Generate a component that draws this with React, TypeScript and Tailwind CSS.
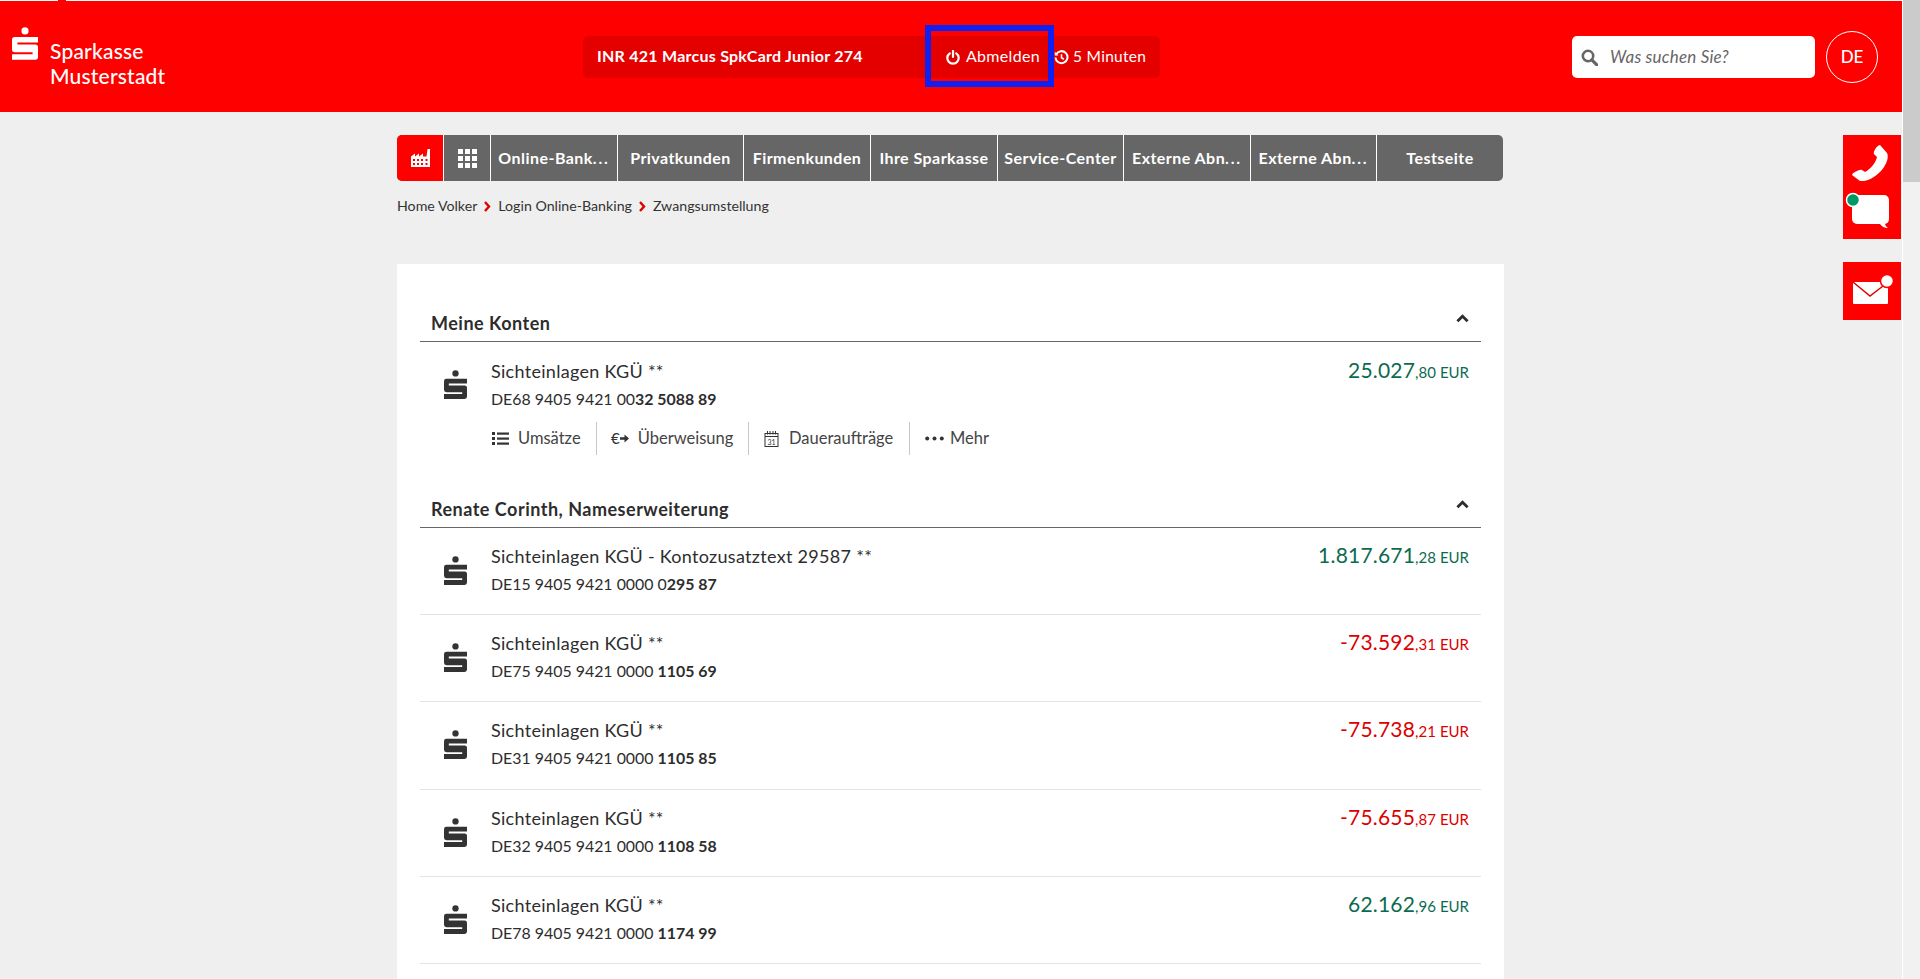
const font = "font-['Lato','Noto_Sans',sans-serif]";

const navItems = [
  { label: 'Online-Bank', dots: true, width: 'w-[127px]' },
  { label: 'Privatkunden', dots: false, width: 'w-[126px]' },
  { label: 'Firmenkunden', dots: false, width: 'w-[127px]' },
  { label: 'Ihre Sparkasse', dots: false, width: 'w-[127px]' },
  { label: 'Service-Center', dots: false, width: 'w-[126px]' },
  { label: 'Externe Abn', dots: true, width: 'w-[127px]' },
  { label: 'Externe Abn', dots: true, width: 'w-[126px]' },
  { label: 'Testseite', dots: false, width: 'w-[126px]' },
];

const accounts = [
  { name: 'Sichteinlagen KGÜ - Kontozusatztext 29587 **', iban: 'DE15 9405 9421 0000 0', bold: '295 87', euro: '1.817.671', cent: '28', height: 'h-[87px]' },
  { name: 'Sichteinlagen KGÜ **', iban: 'DE75 9405 9421 0000 ', bold: '1105 69', euro: '-73.592', cent: '31', height: 'h-[87px]' },
  { name: 'Sichteinlagen KGÜ **', iban: 'DE31 9405 9421 0000 ', bold: '1105 85', euro: '-75.738', cent: '21', height: 'h-[88px]' },
  { name: 'Sichteinlagen KGÜ **', iban: 'DE32 9405 9421 0000 ', bold: '1108 58', euro: '-75.655', cent: '87', height: 'h-[87px]' },
  { name: 'Sichteinlagen KGÜ **', iban: 'DE78 9405 9421 0000 ', bold: '1174 99', euro: '62.162', cent: '96', height: 'h-[87px]' },
];

function SparkasseS({ className }: { className: string }) {
  return (
    <svg viewBox="0 0 24 30" className={className} fill="currentColor">
      <circle cx="12" cy="3.4" r="3.3" />
      <path d="M2.5 9H24v5H5v2h16.500A2.500 2.500 0 0 1 24 18.500v9a2.500 2.500 0 0 1-2.500 2.500H0v-5h19v-2H2.500A2.500 2.500 0 0 1 0 20.500v-9A2.500 2.500 0 0 1 2.500 9z" />
    </svg>
  );
}

function Chevron() {
  return (
    <svg viewBox="0 0 14 9" className="w-[13px] h-[9px] mb-[12px] mr-[12px] text-[#2d2d2d]" fill="none" stroke="currentColor" strokeWidth="3">
      <path d="M1.500 7.500 7 2l5.500 5.500" />
    </svg>
  );
}

function Amount({ euro, cent }: { euro: string; cent: string }) {
  const color = euro.startsWith('-') ? 'text-[#dc0000]' : 'text-[#0b6b50]';
  return (
    <div className={`${color} pr-[12px] -mt-[2px] whitespace-nowrap leading-[24px]`}>
      <span className="text-[21px] tracking-[0.2px]">{euro}</span>
      <span className="text-[15px]">,{cent}</span>
      <span className="text-[15px] ml-[4px]">EUR</span>
    </div>
  );
}

function AccountInfo({ name, iban, bold }: { name: string; iban: string; bold: string }) {
  return (
    <div className="-mt-[1px]">
      <div className="text-[18px] leading-[24px] text-[#2d2d2d] tracking-[0.3px]">{name}</div>
      <div className="text-[15.900px] leading-[24px] mt-[4px] text-[#2d2d2d]">
        {iban}
        <b className="font-bold">{bold}</b>
      </div>
    </div>
  );
}

function ActionBar() {
  return (
    <div className="flex items-center h-[33px] mt-[11px] text-[16.500px] text-[#444444]">
      <div className="w-[106px] h-full border-r border-[#c8c8c8] flex items-center pl-[1px] gap-[9px]">
        <svg viewBox="0 0 17 13" className="w-[17px] h-[13px]" fill="#333333">
          <rect x="0" y="0" width="3" height="3" />
          <rect x="5" y="0.500" width="12" height="2.200" />
          <rect x="0" y="5" width="3" height="3" />
          <rect x="5" y="5.500" width="12" height="2.200" />
          <rect x="0" y="10" width="3" height="3" />
          <rect x="5" y="10.500" width="12" height="2.200" />
        </svg>
        Umsätze
      </div>
      <div className="w-[152px] h-full border-r border-[#c8c8c8] flex items-center pl-[14px]">
        <span className="text-[#333333] text-[15px]">€</span>
        <svg viewBox="0 0 10 9" className="w-[9px] h-[9px] mr-[9px]" fill="#333333">
          <path d="M0 3.200h5V0l5 4.500L5 9V5.800H0z" />
        </svg>
        Überweisung
      </div>
      <div className="w-[161px] h-full border-r border-[#c8c8c8] flex items-center pl-[15px] gap-[10px]">
        <svg viewBox="0 0 15 16" className="w-[15px] h-[16px]" fill="none" stroke="#333333">
          <rect x="1" y="2.500" width="13" height="13" />
          <path d="M1 5.500h13M3.500 0v3.500M6 0v3.500M9 0v3.500M11.500 0v3.500" />
          <text x="7.500" y="13.500" fontSize="7" textAnchor="middle" fill="#333333" stroke="none">31</text>
        </svg>
        Daueraufträge
      </div>
      <div className="flex items-center pl-[15px] gap-[6px]">
        <svg viewBox="0 0 19 5" className="w-[19px] h-[5px]" fill="#333333">
          <circle cx="2.200" cy="2.500" r="2" />
          <circle cx="9.500" cy="2.500" r="2" />
          <circle cx="16.800" cy="2.500" r="2" />
        </svg>
        Mehr
      </div>
    </div>
  );
}

export default function App() {
  return (
    <div className={`${font} flex h-[979px] w-[1920px] overflow-hidden bg-[#efefef] text-[#2d2d2d]`}>
      <div className="relative w-[1902px] h-full shrink-0 flex flex-col">
        <div className="h-px bg-white flex">
          <div className="ml-[58px] w-[8px] h-px bg-[#ff0000]" />
        </div>
        <header className="h-[111px] shrink-0 bg-[#ff0000] flex items-start text-white">
          <div className="w-[583px] shrink-0 flex items-start pl-[12px] pt-[26px]">
            <SparkasseS className="w-[26px] h-[33px]" />
            <div className="ml-[12px] mt-[11px] text-[21px] leading-[25px] font-medium tracking-[0.2px]">
              <div>Sparkasse</div>
              <div>Musterstadt</div>
            </div>
          </div>
          <div className="mt-[35px] w-[577px] h-[42px] rounded-[5px] bg-[#e50000] flex items-center text-[15.500px]">
            <div className="w-[342px] pl-[14px] pb-[2px] font-bold tracking-[0.25px] text-[16px]">INR 421 Marcus SpkCard Junior 274</div>
            <div className="relative w-[129px] h-full flex items-center pl-[21px] gap-[6px] tracking-[0.3px] text-[16px]">
              <span className="absolute left-0 top-[-11px] w-[129px] h-[62px] border-[6px] border-[#1020f0]" />
              <svg viewBox="0 0 14 15" className="w-[14px] h-[15px]" fill="none" stroke="white" strokeWidth="2.200" strokeLinecap="round">
                <path d="M7 1v6M3.800 3.300a5.700 5.700 0 1 0 6.400 0" />
              </svg>
              <span className="-mt-[2px]">Abmelden</span>
            </div>
            <div className="flex items-center gap-[4px] tracking-[0.3px]">
              <svg viewBox="0 0 15 15" className="w-[15px] h-[15px]" fill="none" stroke="white" strokeWidth="2">
                <path d="M2.200 4.300a6 6 0 1 1-.7 3.200" />
                <path d="M7.500 4.200v3.600l2.400 1.500" strokeWidth="1.600" />
                <path d="M0.800 1.800v3.600h3.600z" fill="white" stroke="none" />
              </svg>
              5 Minuten
            </div>
          </div>
          <div className="ml-[412px] mt-[35px] w-[243px] h-[42px] rounded-[5px] bg-white flex items-center pl-[9px] gap-[12px] text-[#666666]">
            <svg viewBox="0 0 17 17" className="w-[17px] h-[17px]" fill="none" stroke="#666666">
              <circle cx="7" cy="7" r="5.200" strokeWidth="2.600" />
              <path d="M10.800 10.800l5 5" strokeWidth="3.200" strokeLinecap="round" />
            </svg>
            <span className="italic text-[17px] tracking-[0.2px] -mt-[1px]">Was suchen Sie?</span>
          </div>
          <div className="ml-[11px] mt-[30px] w-[52px] h-[52px] rounded-full border border-white flex items-center justify-center text-[17px] font-medium">
            DE
          </div>
        </header>

        <div className="ml-[397px] w-[1107px] flex-1 flex flex-col min-h-0">
          <nav className="mt-[23px] h-[46px] w-[1106px] shrink-0 flex rounded-[5px] overflow-hidden bg-[#666666] text-white text-[16px] font-bold tracking-[0.45px]">
            <div className="w-[47px] border-r border-white bg-[#ff0000] flex items-center justify-center">
              <svg viewBox="0 0 19 18" className="w-[19px] h-[18px]" fill="white">
                <path d="M0 7.500l4-3v3l4-3v3l4-3v3h3.500L16.500 0H19v18H0z" />
                <path d="M2 10h2v2H2zM6 10h2v2H6zM10 10h2v2h-2zM14.500 10h2v2h-2zM2 14h2v2H2zM6 14h2v2H6zM10 14h2v2h-2zM14.500 14h2v2h-2z" fill="#ff0000" />
              </svg>
            </div>
            <div className="w-[47px] border-r border-white flex items-center justify-center">
              <div className="grid grid-cols-3 gap-[2px]">
                {Array.from({ length: 9 }).map((_, i) => (
                  <span key={i} className="w-[5px] h-[5px] bg-white" />
                ))}
              </div>
            </div>
            {navItems.map((item, i) => (
              <div
                key={i}
                className={`${item.width} ${i < navItems.length - 1 ? 'border-r border-white' : ''} flex items-center justify-center whitespace-nowrap`}
              >
                {item.label}
                {item.dots && <span className="tracking-[1.800px]">...</span>}
              </div>
            ))}
          </nav>

          <div className="mt-[14px] h-[22px] shrink-0 flex items-center text-[14.200px] text-[#333333]">
            <span>Home Volker</span>
            <svg viewBox="0 0 7 11" className="w-[7px] h-[11px] mx-[7px]" fill="none" stroke="#e10000" strokeWidth="2.400">
              <path d="M1 1l4 4.500L1 10" />
            </svg>
            <span>Login Online-Banking</span>
            <svg viewBox="0 0 7 11" className="w-[7px] h-[11px] mx-[7px]" fill="none" stroke="#e10000" strokeWidth="2.400">
              <path d="M1 1l4 4.500L1 10" />
            </svg>
            <span>Zwangsumstellung</span>
          </div>

          <main className="mt-[47px] flex-1 bg-white px-[23px]">
            <div className="h-[78px] border-b-[1.500px] border-[#666666] flex items-end justify-between pb-[6px] pl-[11px]">
              <h2 className="text-[18px] leading-[24px] font-bold tracking-[0.5px]">Meine Konten</h2>
              <Chevron />
            </div>
            <div className="h-[150px] flex justify-between pt-[18px]">
              <div className="flex">
                <SparkasseS className="ml-[24px] mt-[10px] w-[23px] h-[29px] text-[#333333] shrink-0" />
                <div className="ml-[24px]">
                  <AccountInfo name="Sichteinlagen KGÜ **" iban="DE68 9405 9421 00" bold="32 5088 89" />
                  <ActionBar />
                </div>
              </div>
              <Amount euro="25.027" cent="80" />
            </div>

            <div className="h-[36px] border-b-[1.500px] border-[#666666] flex items-end justify-between pb-[6px] pl-[11px]">
              <h2 className="text-[18px] leading-[24px] font-bold tracking-[0.5px]">Renate Corinth, Nameserweiterung</h2>
              <Chevron />
            </div>
            {accounts.map((a) => (
              <div key={a.bold} className={`${a.height} border-b border-[#e3e3e3] flex justify-between pt-[17px]`}>
                <div className="flex">
                  <SparkasseS className="ml-[24px] mt-[11px] w-[23px] h-[29px] text-[#333333] shrink-0" />
                  <div className="ml-[24px]">
                    <AccountInfo name={a.name} iban={a.iban} bold={a.bold} />
                  </div>
                </div>
                <Amount euro={a.euro} cent={a.cent} />
              </div>
            ))}
          </main>
        </div>

        <div className="absolute right-[1px] top-[135px] w-[58px] h-[104px] bg-[#ff0000]">
          <svg viewBox="0 0 36 36" className="absolute left-[9px] top-[10px] w-[36px] h-[36px]" fill="white">
            <path d="M28 0l7 8c2 4 0 12-7 19-7 7-15 10-20 9l-8-6c0-2 8-6 10-5l3 2c6-3 11-10 12-15l-3-3c-1-2 3-9 6-9z" />
          </svg>
          <svg viewBox="0 0 58 50" className="absolute left-0 top-[54px] w-[58px] h-[50px]">
            <path d="M14 6h27a5 5 0 0 1 5 5v19a5 5 0 0 1-4 4.900c.5 1.800 1.500 3 3 4.100-3 .2-6-1.200-8-4H14a5 5 0 0 1-5-5V11a5 5 0 0 1 5-5z" fill="white" />
            <circle cx="10" cy="11" r="6.500" fill="#009966" stroke="white" strokeWidth="1.500" />
          </svg>
        </div>
        <div className="absolute right-[1px] top-[262px] w-[58px] h-[58px] bg-[#ff0000]">
          <svg viewBox="0 0 58 58" className="w-[58px] h-[58px]">
            <rect x="10" y="20" width="35" height="22" rx="1" fill="white" />
            <path d="M10 20l17 14 13-10" fill="none" stroke="#e10000" strokeWidth="1.500" />
            <circle cx="44" cy="19" r="6.500" fill="white" stroke="#ff0000" strokeWidth="1.500" />
          </svg>
        </div>
      </div>

      <div className="w-[18px] h-full bg-[#f1f1f1] border-l border-white">
        <div className="w-[17px] h-[182px] bg-[#cbcbcb]" />
      </div>
    </div>
  );
}
